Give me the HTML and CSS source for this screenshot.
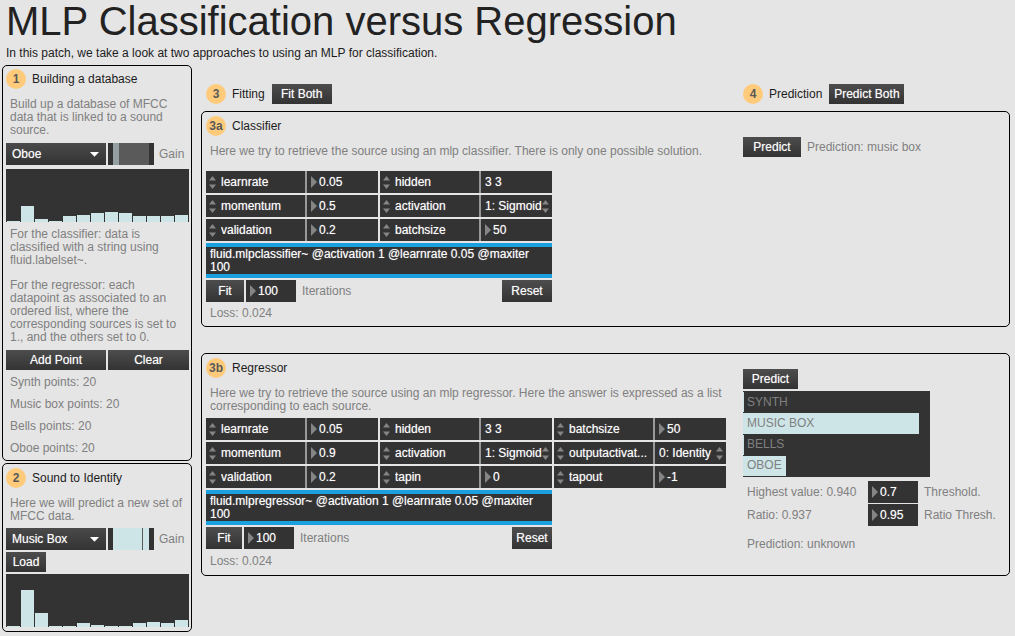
FILE: index.html
```html
<!DOCTYPE html>
<html lang="en">
<head>
<meta charset="utf-8">
<title>MLP Classification versus Regression</title>
<link rel="stylesheet" href="styles.css">
</head>
<body>
<svg class="symbols" aria-hidden="true">
  <symbol id="stepper" viewBox="0 0 7 13"><path d="M3.5 0L7 4.5H0zM0 8.5H7L3.5 13z"/></symbol>
  <symbol id="tri" viewBox="0 0 6 12"><path d="M0 0L6 6L0 12z"/></symbol>
  <symbol id="caret" viewBox="0 0 9 5"><path d="M0 0H9L4.5 4.7z"/></symbol>
</svg>

<header class="page-head">
  <h1>MLP Classification versus Regression</h1>
  <p>In this patch, we take a look at two approaches to using an MLP for classification.</p>
</header>

<main class="patch">
  <div class="side">
    <section class="panel side-panel">
      <h2 class="heading"><span class="badge">1</span>Building a database</h2>
      <p class="note note-build">Build up a database of MFCC data that is linked to a sound source.</p>
      <div class="source">
        <div class="menu">
          <select aria-label="Source"><option>Oboe</option></select>
          <svg class="caret"><use href="#caret"/></svg>
        </div>
        <input class="gain gain-low" id="gain1" type="range" value="16">
        <label for="gain1">Gain</label>
      </div>
      <div class="chart chart-db">
        <span style="height:1px"></span><span style="height:16px"></span><span style="height:3px"></span><span style="height:1px"></span><span style="height:6px"></span><span style="height:7px"></span><span style="height:9px"></span><span style="height:10px"></span><span style="height:9px"></span><span style="height:6px"></span><span style="height:6px"></span><span style="height:6px"></span><span style="height:7px"></span>
      </div>
      <p class="note note-class">For the classifier: data is classified with a string using fluid.labelset~.</p>
      <p class="note note-reg">For the regressor: each datapoint as associated to an ordered list, where the corresponding sources is set to 1., and the others set to 0.</p>
      <div class="pair">
        <button class="btn">Add Point</button>
        <button class="btn">Clear</button>
      </div>
      <ul class="counts">
        <li>Synth points: 20</li>
        <li>Music box points: 20</li>
        <li>Bells points: 20</li>
        <li>Oboe points: 20</li>
      </ul>
    </section>

    <section class="panel side-panel identify">
      <h2 class="heading"><span class="badge">2</span>Sound to Identify</h2>
      <p class="note note-identify">Here we will predict a new set of MFCC data.</p>
      <div class="source">
        <div class="menu">
          <select aria-label="Sound to identify"><option>Music Box</option></select>
          <svg class="caret"><use href="#caret"/></svg>
        </div>
        <input class="gain gain-high" id="gain2" type="range" value="83">
        <label for="gain2">Gain</label>
      </div>
      <button class="btn load">Load</button>
      <div class="chart">
        <span style="height:1px"></span><span style="height:37px"></span><span style="height:14px"></span><span style="height:1px"></span><span style="height:1px"></span><span style="height:4px"></span><span style="height:2px"></span><span style="height:1px"></span><span style="height:1px"></span><span style="height:4px"></span><span style="height:5px"></span><span style="height:4px"></span><span style="height:7px"></span>
      </div>
    </section>
  </div>

  <div class="models">
    <div class="columns top-row">
      <div class="action">
        <h2 class="heading"><span class="badge">3</span>Fitting</h2>
        <button class="btn w60">Fit Both</button>
      </div>
      <div class="action">
        <h2 class="heading"><span class="badge">4</span>Prediction</h2>
        <button class="btn w75">Predict Both</button>
      </div>
    </div>

    <section class="panel columns model">
      <div class="fitting">
        <h3 class="heading"><span class="badge">3a</span>Classifier</h3>
        <p class="note note-classifier">Here we try to retrieve the source using an mlp classifier. There is only one possible solution.</p>
        <div class="params two">
          <div class="param">
            <div class="cell pick"><svg class="step"><use href="#stepper"/></svg><select aria-label="Attribute"><option>learnrate</option></select></div>
            <div class="cell num"><svg class="tri"><use href="#tri"/></svg><input aria-label="learnrate" value="0.05"></div>
          </div>
          <div class="param">
            <div class="cell pick"><svg class="step"><use href="#stepper"/></svg><select aria-label="Attribute"><option>hidden</option></select></div>
            <div class="cell"><input aria-label="hidden" value="3 3"></div>
          </div>
          <div class="param">
            <div class="cell pick"><svg class="step"><use href="#stepper"/></svg><select aria-label="Attribute"><option>momentum</option></select></div>
            <div class="cell num"><svg class="tri"><use href="#tri"/></svg><input aria-label="momentum" value="0.5"></div>
          </div>
          <div class="param">
            <div class="cell pick"><svg class="step"><use href="#stepper"/></svg><select aria-label="Attribute"><option>activation</option></select></div>
            <div class="cell enum"><svg class="step"><use href="#stepper"/></svg><select aria-label="activation"><option>1: Sigmoid</option></select></div>
          </div>
          <div class="param">
            <div class="cell pick"><svg class="step"><use href="#stepper"/></svg><select aria-label="Attribute"><option>validation</option></select></div>
            <div class="cell num"><svg class="tri"><use href="#tri"/></svg><input aria-label="validation" value="0.2"></div>
          </div>
          <div class="param">
            <div class="cell pick"><svg class="step"><use href="#stepper"/></svg><select aria-label="Attribute"><option>batchsize</option></select></div>
            <div class="cell num"><svg class="tri"><use href="#tri"/></svg><input aria-label="batchsize" value="50"></div>
          </div>
        </div>
        <div class="object">fluid.mlpclassifier~ @activation 1 @learnrate 0.05 @maxiter 100</div>
        <div class="run">
          <button class="btn w38">Fit</button>
          <div class="cell num number"><svg class="tri"><use href="#tri"/></svg><input id="iter1" value="100"></div>
          <label for="iter1">Iterations</label>
          <button class="btn reset w50">Reset</button>
        </div>
        <p class="readout">Loss: 0.024</p>
      </div>
      <div class="result result-class">
        <div class="action">
          <button class="btn w58">Predict</button>
          <output>Prediction: music box</output>
        </div>
      </div>
    </section>

    <section class="panel columns model regressor">
      <div class="fitting">
        <h3 class="heading"><span class="badge">3b</span>Regressor</h3>
        <p class="note note-regressor">Here we try to retrieve the source using an mlp regressor. Here the answer is expressed as a list corresponding to each source.</p>
        <div class="params three">
          <div class="param">
            <div class="cell pick"><svg class="step"><use href="#stepper"/></svg><select aria-label="Attribute"><option>learnrate</option></select></div>
            <div class="cell num"><svg class="tri"><use href="#tri"/></svg><input aria-label="learnrate" value="0.05"></div>
          </div>
          <div class="param">
            <div class="cell pick"><svg class="step"><use href="#stepper"/></svg><select aria-label="Attribute"><option>hidden</option></select></div>
            <div class="cell"><input aria-label="hidden" value="3 3"></div>
          </div>
          <div class="param">
            <div class="cell pick"><svg class="step"><use href="#stepper"/></svg><select aria-label="Attribute"><option>batchsize</option></select></div>
            <div class="cell num"><svg class="tri"><use href="#tri"/></svg><input aria-label="batchsize" value="50"></div>
          </div>
          <div class="param">
            <div class="cell pick"><svg class="step"><use href="#stepper"/></svg><select aria-label="Attribute"><option>momentum</option></select></div>
            <div class="cell num"><svg class="tri"><use href="#tri"/></svg><input aria-label="momentum" value="0.9"></div>
          </div>
          <div class="param">
            <div class="cell pick"><svg class="step"><use href="#stepper"/></svg><select aria-label="Attribute"><option>activation</option></select></div>
            <div class="cell enum"><svg class="step"><use href="#stepper"/></svg><select aria-label="activation"><option>1: Sigmoid</option></select></div>
          </div>
          <div class="param">
            <div class="cell pick"><svg class="step"><use href="#stepper"/></svg><select aria-label="Attribute"><option>outputactivat...</option></select></div>
            <div class="cell enum"><svg class="step"><use href="#stepper"/></svg><select aria-label="outputactivation"><option>0: Identity</option></select></div>
          </div>
          <div class="param">
            <div class="cell pick"><svg class="step"><use href="#stepper"/></svg><select aria-label="Attribute"><option>validation</option></select></div>
            <div class="cell num"><svg class="tri"><use href="#tri"/></svg><input aria-label="validation" value="0.2"></div>
          </div>
          <div class="param">
            <div class="cell pick"><svg class="step"><use href="#stepper"/></svg><select aria-label="Attribute"><option>tapin</option></select></div>
            <div class="cell num"><svg class="tri"><use href="#tri"/></svg><input aria-label="tapin" value="0"></div>
          </div>
          <div class="param">
            <div class="cell pick"><svg class="step"><use href="#stepper"/></svg><select aria-label="Attribute"><option>tapout</option></select></div>
            <div class="cell num"><svg class="tri"><use href="#tri"/></svg><input aria-label="tapout" value="-1"></div>
          </div>
        </div>
        <div class="object">fluid.mlpregressor~ @activation 1 @learnrate 0.05 @maxiter 100</div>
        <div class="run">
          <button class="btn w36">Fit</button>
          <div class="cell num number"><svg class="tri"><use href="#tri"/></svg><input id="iter2" value="100"></div>
          <label for="iter2">Iterations</label>
          <button class="btn reset w40">Reset</button>
        </div>
        <p class="readout">Loss: 0.024</p>
      </div>
      <div class="result result-reg">
        <button class="btn w55">Predict</button>
        <ul class="scores">
          <li><span class="score" style="width:1px"></span><span>SYNTH</span></li>
          <li><span class="score" style="width:94%"></span><span>MUSIC BOX</span></li>
          <li><span class="score" style="width:1px"></span><span>BELLS</span></li>
          <li><span class="score" style="width:23%"></span><span>OBOE</span></li>
        </ul>
        <div class="limits">
          <output>Highest value: 0.940</output>
          <div class="cell num"><svg class="tri"><use href="#tri"/></svg><input id="thresh" value="0.7"></div>
          <label for="thresh">Threshold.</label>
          <output>Ratio: 0.937</output>
          <div class="cell num"><svg class="tri"><use href="#tri"/></svg><input id="ratio" value="0.95"></div>
          <label for="ratio">Ratio Thresh.</label>
        </div>
        <output class="verdict">Prediction: unknown</output>
      </div>
    </section>
  </div>
</main>
</body>
</html>
```
FILE: styles.css
```css
:root {
  --bg: #e5e5e5;
  --dark: #333333;
  --light: #cee5e8;
  --muted: #808080;
  --ink: #1c1c1c;
  --glow: 0 0 1px rgba(255, 255, 255, 0.5);
}

* { box-sizing: border-box; }

body, h1, h2, h3, p, ul { margin: 0; padding: 0; }

ul { list-style: none; }

body {
  background: var(--bg);
  color: var(--muted);
  font: 12px/13px "Liberation Sans", Arial, sans-serif;
}

button, input, select {
  margin: 0;
  border: 0;
  border-radius: 0;
  font: inherit;
  color: #fff;
  text-shadow: var(--glow);
  appearance: none;
}

.symbols { display: none; }

.page-head { padding: 0 6px 5px; color: var(--ink); }
.page-head h1 { font-size: 40px; font-weight: 400; line-height: 42px; color: #222; }
.page-head p { margin-top: 4px; line-height: 14px; }

.patch {
  display: grid;
  grid-template-columns: 190px 1fr;
  gap: 9px;
  align-items: start;
  padding: 0 5px 4px 2px;
}

.side { display: grid; gap: 2px; }

.panel { border: 1px solid #000; border-radius: 5px; }
.side-panel { padding: 3px 2px 1px 3px; }
.identify { padding: 4px 2px 4px 3px; }

.heading {
  display: flex;
  align-items: center;
  gap: 6px;
  font-size: 12px;
  font-weight: 400;
  color: var(--ink);
}

.badge {
  width: 20px;
  height: 20px;
  border-radius: 50%;
  background: #ffcb7b;
  color: #595959;
  font-weight: 700;
  line-height: 20px;
  text-align: center;
}

.note { padding: 0 4px; }
.note-build { margin: 9px 0 6px; }
.note-class { margin: 6px 0 12px; }
.note-reg { margin-bottom: 6px; }
.note-identify { margin: 9px 0 5px; }
.note-classifier { margin: 9px 0 13px; }
.note-regressor { margin: 9px 0 5px; }

.source { display: flex; align-items: center; gap: 2px; }
.source label { margin-left: 3px; }

.menu { position: relative; width: 100px; }
.menu select {
  display: block;
  width: 100%;
  height: 22px;
  padding: 0 20px 0 6px;
  background: linear-gradient(#4a4a4a, #333);
}
.caret {
  position: absolute;
  right: 7px;
  top: 9px;
  width: 9px;
  height: 5px;
  fill: #fff;
  pointer-events: none;
}

.gain {
  width: 46px;
  height: 22px;
  border: solid var(--dark);
  border-width: 0 5px;
}
.gain::-webkit-slider-thumb { appearance: none; width: 1px; height: 22px; background: transparent; }
.gain-low { background: linear-gradient(90deg, #939fa1 6px, #5a5a5a 6px); }
.gain-high { background: linear-gradient(90deg, var(--light) 29px, #5a5a5a 29px 30px, var(--light) 30px); }

.chart {
  display: grid;
  grid-template-columns: repeat(13, 1fr);
  gap: 1px;
  align-items: end;
  height: 53px;
  padding: 0 1px;
  background: var(--dark);
}
.chart span { background: var(--light); }
.chart-db { margin-top: 4px; }

.pair { display: grid; grid-template-columns: 100px 1fr; gap: 2px; }

.btn {
  height: 20px;
  padding: 0;
  background: linear-gradient(#4d4d4d, #333);
  text-align: center;
}
.load { display: block; width: 40px; margin: 2px 0; }

.counts { padding: 1px 4px 0; line-height: 22px; }

.w36 { width: 36px; }
.w38 { width: 38px; }
.w40 { width: 40px; }
.w50 { width: 50px; }
.w55 { width: 55px; }
.w58 { width: 58px; }
.w60 { width: 60px; }
.w75 { width: 75px; }

.columns { display: grid; grid-template-columns: 1fr 262px; }
.top-row { margin: 19px 0 7px; padding: 0 5px; }
.action { display: flex; align-items: center; gap: 6px; }
.top-row .action { gap: 7px; }

.model { padding: 4px 4px 2px; }
.regressor { margin-top: 26px; padding-bottom: 3px; }
.regressor .readout { margin-top: 1px; }

.params { display: grid; gap: 2px; }
.two { grid-template-columns: repeat(2, 172px); }
.three { grid-template-columns: repeat(3, 172px); }
.param { display: grid; grid-template-columns: 99px 71px; gap: 2px; background: #999; }

.cell { position: relative; height: 22px; background: var(--dark); }
.cell input, .cell select {
  display: block;
  width: 100%;
  height: 22px;
  padding: 0 0 0 4px;
  background: transparent;
}
.pick select { padding-left: 15px; }
.num input { padding-left: 12px; }

.step, .tri { position: absolute; fill: #858585; pointer-events: none; }
.step { top: 5px; width: 7px; height: 13px; }
.pick .step { left: 3px; }
.enum .step { right: 3px; }
.tri { left: 4px; top: 5px; width: 6px; height: 12px; }

.object {
  width: 346px;
  margin: 2px 0;
  padding: 1px 4px 0;
  border: solid #1a9fe0;
  border-width: 4px 0;
  background: var(--dark);
  color: #fff;
  text-shadow: var(--glow);
}

.run { display: flex; align-items: center; gap: 2px; width: 346px; }
.run .btn { height: 22px; }
.run label { margin-left: 4px; }
.number { width: 50px; }
.reset { margin-left: auto; }

.readout { padding-left: 4px; line-height: 22px; }

.result-class { padding-top: 21px; }
.result-reg { padding-top: 11px; }
.result-reg .btn { display: block; }

.scores {
  display: grid;
  grid-auto-rows: 1fr;
  gap: 1px;
  width: 187px;
  height: 86px;
  margin: 2px 0 4px;
  padding: 1px 0;
  background: var(--dark);
}
.scores li { display: grid; align-items: center; }
.scores span { grid-area: 1 / 1; padding-left: 4px; }
.scores .score { align-self: stretch; padding: 0; background: var(--light); }

.limits {
  display: grid;
  grid-template-columns: 119px 50px 1fr;
  column-gap: 2px;
  row-gap: 1px;
  align-items: center;
  padding-left: 4px;
}
.limits label { padding-left: 4px; }

.verdict { display: block; margin-top: 12px; padding-left: 4px; }
```
